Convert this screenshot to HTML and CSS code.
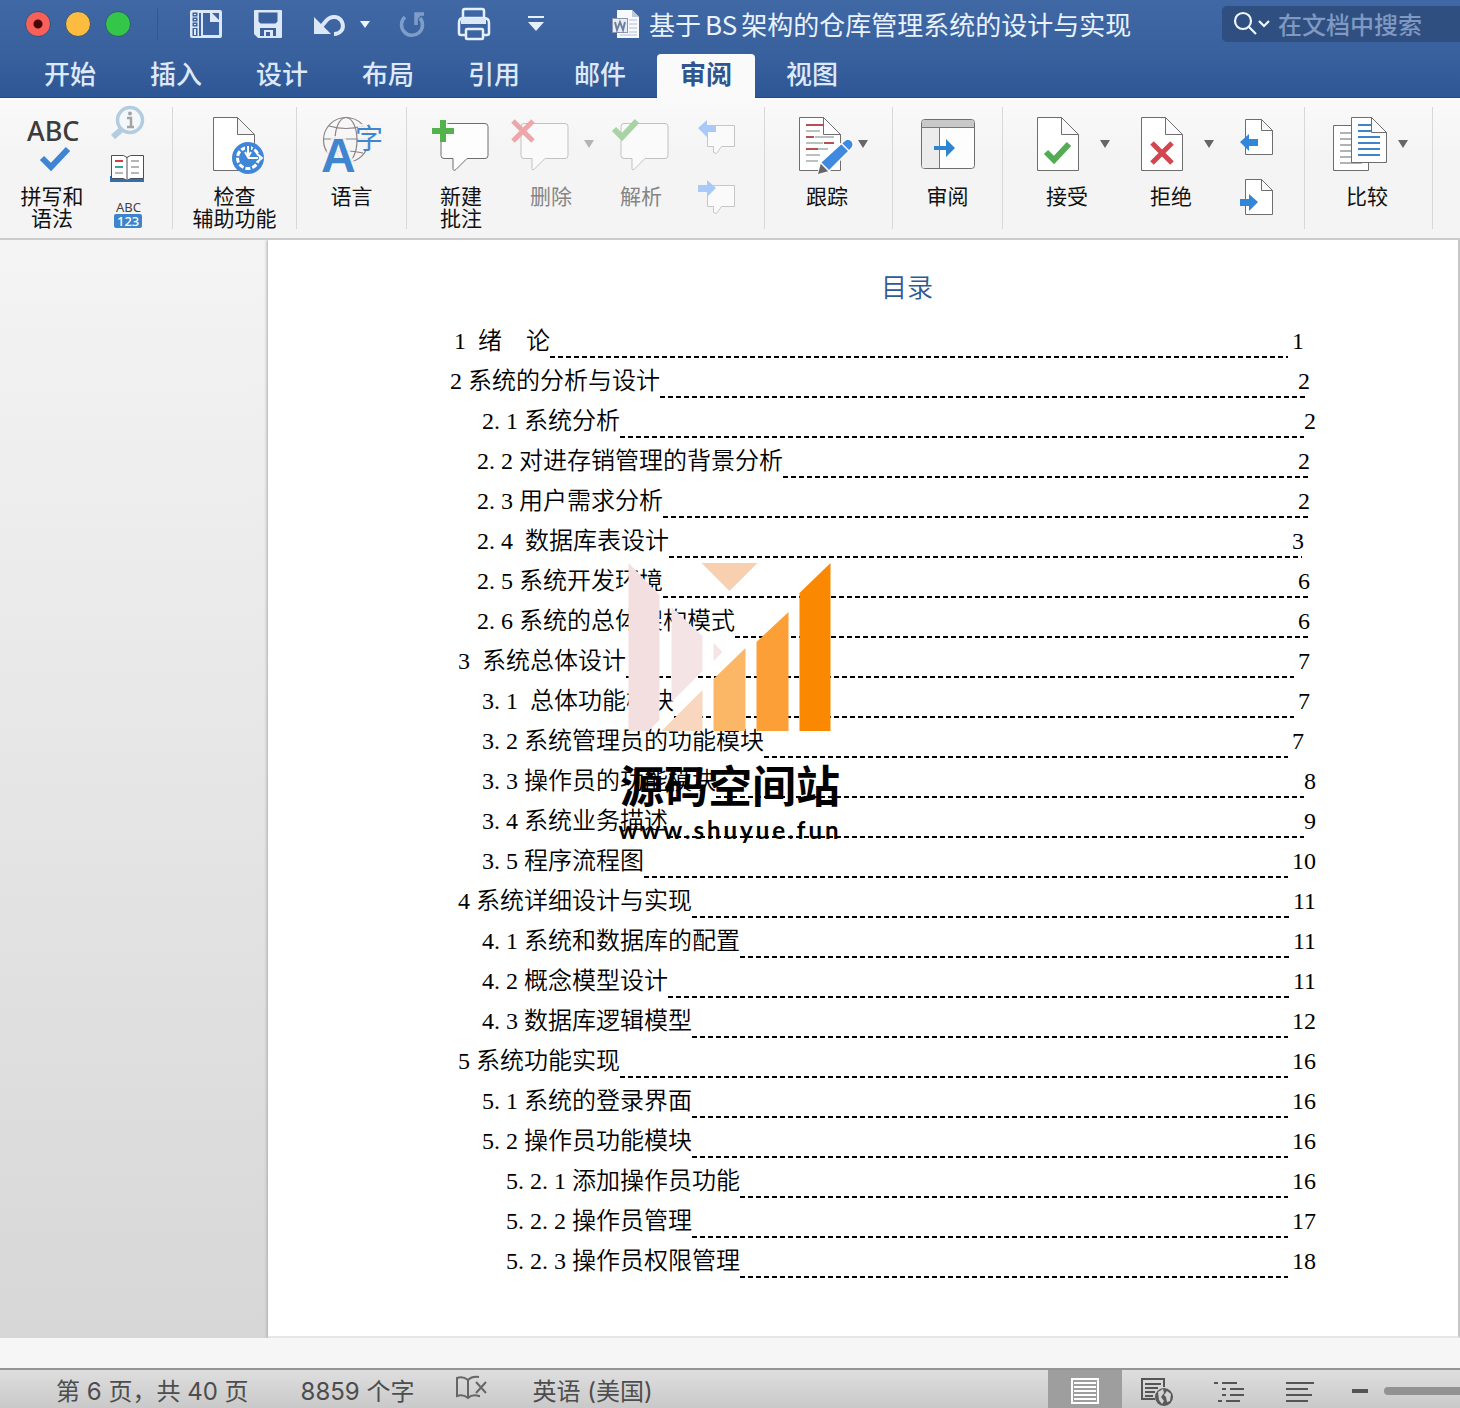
FILE: index.html
```html
<!DOCTYPE html>
<html lang="zh-CN">
<head>
<meta charset="utf-8">
<title>基于BS架构的仓库管理系统的设计与实现</title>
<link rel="stylesheet" href="styles.css">
</head>
<body>
<div class="window">
  <header class="chrome">
    <div class="titlebar">
      <div class="lights">
        <button class="light red" aria-label="关闭"></button>
        <button class="light yellow" aria-label="最小化"></button>
        <button class="light green" aria-label="缩放"></button>
      </div>
      <div class="quick">
        <button class="q" aria-label="边栏"><svg width="62" height="48" viewBox="175 0 62 48"><rect x="190" y="10" width="32" height="28" rx="2" fill="#dce7f7"/><path d="M192.500 12.500h5v4h-5zM192.500 17.500h5v4h-5zM192.500 22.500h5v4h-5zM199 13h2v23h-2zM192.500 28h5v8h-5zM203 13h7v9h9v13h-16z" fill="#3d64a0"/><path d="M212 13h7v7z" fill="#3d64a0"/><path d="M194 14h2v1h-2zM194 19h2v1h-2zM194 24h2v1h-2zM194 29h2v6h-2z" fill="#dce7f7"/></svg></button>
        <button class="q" aria-label="保存"><svg width="62" height="48" viewBox="237 0 62 48"><path d="M255 10h26q1 0 1 1v26q0 1-1 1h-23l-4-4v-23q0-1 1-1z" fill="#dce7f7"/><path d="M258.500 12.500h19v9l-2 2h-15l-2-2zM260 28h16v8h-3v-6h-9v6h-4zM266 32h4v4h-4z" fill="#3a619d"/></svg></button>
        <button class="q wide" aria-label="撤销"><svg width="82" height="48" viewBox="299 0 82 48"><path d="M321 27l5-6c5-6 13-5 16 1 3 7-2 12-8 12" fill="none" stroke="#dce7f7" stroke-width="4"/><path d="M314 17v17h17z" fill="#dce7f7"/><path d="M360 21h10l-5 7z" fill="#eef4fc"/></svg></button>
        <button class="q" aria-label="重做"><svg width="62" height="48" viewBox="381 0 62 48"><path d="M405 17a10.500 10.500 0 1 0 15 1M424 14h-8v11" fill="none" stroke="#7f9dc9" stroke-width="3.500"/><path d="M416 13h7l-7 8z" fill="#7f9dc9"/></svg></button>
        <button class="q" aria-label="打印"><svg width="62" height="48" viewBox="443 0 62 48"><g fill="none" stroke="#e6f0fc" stroke-width="2.500"><path d="M463 18v-7q0-2 2-2h17q2 0 2 2v7"/><path d="M465 35h-4q-2 0-2-2v-10q0-5 4-5h21q5 0 5 5v10q0 2-2 2h-3"/><rect x="466" y="29" width="17" height="10" rx="1"/></g><path d="M461 18h25v6h-25z" fill="#dce7f7"/></svg></button>
        <button class="q" aria-label="自定义工具栏"><svg width="62" height="48" viewBox="505 0 62 48"><path d="M528 16h16v2h-16zM528 22h16l-8 9z" fill="#e6f0fc"/></svg></button>
      </div>
      <h1 class="doc-title"><svg width="30" height="30" viewBox="611 9 30 30" aria-hidden="true"><path d="M617 10h15l7 7v21h-22z" fill="#f7f9fc"/><path d="M632 10l7 7h-7z" fill="#bfc8d6"/><path d="M629 20h8M629 24h8M629 28h8M629 32h8M620 35h17" stroke="#b6c0d0"/><rect x="612.500" y="18.500" width="15" height="14" fill="#e8edf5" stroke="#8a97ad"/><path d="M615 22l2 8 3-8 3 8 2-8" fill="none" stroke="#6d7f9f" stroke-width="2"/></svg><span>基于<span class="latin">BS</span>架构的仓库管理系统的设计与实现</span></h1>
      <label class="search"><svg width="36" height="26" viewBox="1233 11 36 26" aria-hidden="true"><g fill="none" stroke="#f1f6fd" stroke-width="2.200"><circle cx="1243" cy="21" r="8"/><path d="M1249 27l7 7M1259 21l5 5 5-5"/></g></svg><input type="text" placeholder="在文档中搜索" aria-label="在文档中搜索"></label>
    </div>
    <nav class="tabs">
      <button>开始</button><button>插入</button><button>设计</button><button>布局</button><button>引用</button><button>邮件</button><button class="active">审阅</button><button>视图</button>
    </nav>
  </header>

  <div class="ribbon">
    <div class="group g-proof">
      <button class="tool w104"><svg width="104" height="77" viewBox="0 107 104 77"><text x="27" y="141" class="abc">ABC</text><path d="M42 158l9 9 17-18" fill="none" stroke="#3f86d2" stroke-width="6"/></svg><span>拼写和<br>语法</span></button>
      <div class="stack">
        <button aria-label="智能查找"><svg width="48" height="41" viewBox="104 107 48 41"><path d="M113 137l9-8" stroke="#b4cce0" stroke-width="6"/><circle cx="130" cy="120" r="12.500" fill="#f4f8fb" stroke="#b4cce0" stroke-width="3.500"/><path d="M127 118h4v8m-4 1h7" fill="none" stroke="#a3a3a3" stroke-width="2.500"/><circle cx="130" cy="113.500" r="2" fill="#a3a3a3"/></svg></button>
        <button aria-label="同义词库"><svg width="48" height="41" viewBox="104 148 48 41"><path d="M110 176h34v6h-34z" fill="#2f6fb3"/><path d="M111.500 155.500h12l3.500 2 3.500-2h13v23h-13l-3.500 2-3.500-2h-12z" fill="#fff" stroke="#4a5058"/><path d="M127 157v23" stroke="#4a5058"/><path d="M115 161h8" stroke="#d23c45" stroke-width="2"/><path d="M115 167h8" stroke="#38a39b" stroke-width="2"/><path d="M115 173h8M131 161h8M131 167h8M131 173h8" stroke="#b5b5b5" stroke-width="2"/></svg></button>
        <button aria-label="字数统计"><svg width="48" height="41" viewBox="104 189 48 41"><text x="116" y="212" class="abc-sm">ABC</text><rect x="114" y="214" width="28" height="14" rx="2" fill="#3d84cb"/><text x="117" y="226" class="num-sm">123</text></svg></button>
      </div>
    </div>
    <div class="group g-124">
      <button class="tool fill"><svg width="124" height="77" viewBox="173 107 124 77"><path d="M213.500 117.500h24l17 17v36h-41z" fill="#fff" stroke="#6e6e6e"/><path d="M237.500 117.500v17h17z" fill="#f5f5f5" stroke="#6e6e6e"/><circle cx="248" cy="158" r="16" fill="#3f86d6"/><circle cx="248" cy="158" r="10.500" fill="none" stroke="#fff" stroke-width="3" stroke-dasharray="5 2"/><path d="M248 145v13h11" fill="none" stroke="#3f86d6" stroke-width="6"/><path d="M248 146v10M248 158h10M245 152l3 5 3-5M257 154l5 4-5 4" fill="none" stroke="#fff" stroke-width="2"/></svg><span>检查<br>辅助功能</span></button>
    </div>
    <div class="group g-110">
      <button class="tool fill"><svg width="110" height="77" viewBox="297 107 110 77"><g fill="none" stroke="#8c8484" stroke-width="1.200"><circle cx="346" cy="140" r="22.500"/><ellipse cx="346" cy="140" rx="11" ry="22.500"/><path d="M324 139h44M329 126q17 5 34 0M329 153q17-4 34 0"/></g><path d="M358 124h26v27h-26z" fill="#f6f5f6" opacity=".85"/><path d="M319 174l13-38h13l13 38z" fill="#f6f5f6" opacity=".85"/><text x="321" y="172" class="big-a">A</text><text x="355" y="149" class="zi">字</text></svg><span>语言</span></button>
    </div>
    <div class="group g-comments">
      <button class="tool w80"><svg width="80" height="77" viewBox="421 107 80 77"><path d="M446 123.500h39q3 0 3 3v29q0 3-3 3h-18l-11 11q-3 2-3-1v-10h-9q-3 0-3-3v-20z" fill="#fdfdfd" stroke="#6e6e6e"/><path d="M432 131h22M443 120v22" stroke="#f5f5f5" stroke-width="9"/><path d="M432 131h22M443 120v22" stroke="#54b24d" stroke-width="6"/></svg><span>新建<br>批注</span></button>
      <button class="tool w100" disabled><svg width="100" height="77" viewBox="501 107 100 77"><path d="M524 123.500h41q3 0 3 3v29q0 3-3 3h-20l-11 11q-2 1-2-1v-10h-8q-3 0-3-3v-29q0-3 3-3z" fill="#fafafa" stroke="#c2c2c2"/><path d="M513 121l20 20M533 121l-20 20" stroke="#eda6aa" stroke-width="5"/><path d="M584 140h10l-5 8z" fill="#b4b4b4"/></svg><span>删除</span></button>
      <button class="tool w80" disabled><svg width="80" height="77" viewBox="601 107 80 77"><path d="M624 123.500h41q3 0 3 3v29q0 3-3 3h-20l-11 11q-2 1-2-1v-10h-8q-3 0-3-3v-29q0-3 3-3z" fill="#fafafa" stroke="#c2c2c2"/><path d="M614 129l8 8 15-16" fill="none" stroke="#a8d3a5" stroke-width="6"/></svg><span>解析</span></button>
      <div class="stack">
        <button aria-label="上一条批注" disabled><svg width="72" height="61" viewBox="681 107 72 61"><path d="M709.500 125.500h25v21h-13l-5 7-3-1v-6h-6v-20z" fill="#fafafa" stroke="#c6c6c6"/><path d="M698 128l9-8v5h9v7h-9v5z" fill="#a9c9f8"/></svg></button>
        <button aria-label="下一条批注" disabled><svg width="72" height="61" viewBox="681 168 72 61"><path d="M709.500 185.500h25v21h-13l-5 7-3-1v-6h-6v-20z" fill="#fafafa" stroke="#c6c6c6"/><path d="M716 188l-9-8v5h-9v7h9v5z" fill="#a9c9f8"/></svg></button>
      </div>
    </div>
    <div class="group g-128">
      <button class="tool w124"><svg width="124" height="77" viewBox="765 107 124 77"><path d="M799.500 117.500h24l17 17v36h-41z" fill="#fff" stroke="#6e6e6e"/><path d="M806 125h18M806 137h8M824 143h10M806 149h12" stroke="#b55055" stroke-width="1.800"/><path d="M806 131h14M815 137h19M806 143h17M818 149h10M806 155h14M806 161h12" stroke="#b9c2bd" stroke-width="1.800"/><path d="M823.500 117.500v17h17z" fill="#fff" stroke="#6e6e6e"/><path d="M818 174l3-12 23-21q4-4 8 0 3 4-1 8l-22 22z" fill="#3f8ae0" stroke="#fff" stroke-width="1.500"/><path d="M818 174l3-11 8 8z" fill="#666"/><path d="M841 143l8 8M820 162l10 10" stroke="#fff" stroke-width="1.500"/><path d="M858 140h10l-5 8z" fill="#666"/></svg><span>跟踪</span></button>
    </div>
    <div class="group g-110">
      <button class="tool fill"><svg width="110" height="77" viewBox="893 107 110 77"><rect x="921.500" y="119.500" width="53" height="49" rx="3" fill="#fdfdfd" stroke="#6e6e6e"/><path d="M922 128h17.500v40H924q-2 0-2-2z" fill="#ececec"/><path d="M922 127.500v-5q0-2.500 2.500-2.500h47q2.500 0 2.500 2.500v5z" fill="#c8c8c8"/><path d="M922 127.500h52M939.500 128v40" stroke="#777"/><path d="M934 146h12v-7l9 9-9 9v-7h-12z" fill="#2f84d0"/></svg><span>审阅</span></button>
    </div>
    <div class="group g-changes">
      <button class="tool w96"><svg width="96" height="77" viewBox="1019 107 96 77"><path d="M1037.500 117.500h24l17 17v36h-41z" fill="#fff" stroke="#6e6e6e"/><path d="M1061.500 117.500v17h17z" fill="#fafafa" stroke="#6e6e6e"/><path d="M1046 152l8 8 15-16" fill="none" stroke="#55ab53" stroke-width="6"/><path d="M1100 140h10l-5 8z" fill="#666"/></svg><span>接受</span></button>
      <button class="tool w96 gap8"><svg width="96" height="77" viewBox="1123 107 96 77"><path d="M1141.500 117.500h24l17 17v36h-41z" fill="#fff" stroke="#6e6e6e"/><path d="M1165.500 117.500v17h17z" fill="#fafafa" stroke="#6e6e6e"/><path d="M1152 143l20 20M1172 143l-20 20" stroke="#d2474f" stroke-width="5"/><path d="M1204 140h10l-5 8z" fill="#666"/></svg><span>拒绝</span></button>
      <div class="stack">
        <button aria-label="上一处修订"><svg width="72" height="61" viewBox="1219 107 72 61"><path d="M1245.500 119.500h16l11 11v24h-27z" fill="#fff" stroke="#6e6e6e"/><path d="M1261.500 119.500v11h11z" fill="#fafafa" stroke="#6e6e6e"/><path d="M1240 142l9-8v5h9v7h-9v5z" fill="#3286d8"/></svg></button>
        <button aria-label="下一处修订"><svg width="72" height="61" viewBox="1219 168 72 61"><path d="M1245.500 179.500h16l11 11v24h-27z" fill="#fff" stroke="#6e6e6e"/><path d="M1261.500 179.500v11h11z" fill="#fafafa" stroke="#6e6e6e"/><path d="M1258 202l-9-8v5h-9v7h9v5z" fill="#3286d8"/></svg></button>
      </div>
    </div>
    <div class="group g-128">
      <button class="tool w124"><svg width="124" height="77" viewBox="1305 107 124 77"><path d="M1333.500 125.500h35v45h-35z" fill="#fff" stroke="#6e6e6e"/><path d="M1340 133h14M1340 139h14M1340 145h14M1340 151h14M1340 157h14M1340 163h22" stroke="#999" stroke-width="1.500"/><path d="M1351.500 117.500h20l15 15v30h-35z" fill="#fff" stroke="#6e6e6e"/><path d="M1358 125h14M1358 131h14M1358 137h22M1358 143h22M1358 149h22M1358 155h22" stroke="#3f86c8" stroke-width="2"/><path d="M1371.500 117.500v15h15z" fill="#fff" stroke="#6e6e6e"/><path d="M1398 140h10l-5 8z" fill="#666"/></svg><span>比较</span></button>
    </div>
  </div>

  <main class="canvas">
    <article class="page">
      <h2>目录</h2>
      <ol class="toc">
        <li class="in4 r12"><span>1&nbsp; 绪　论</span><i></i><b>1</b></li>
        <li class="in0 r6 under"><span>2 系统的分析与设计</span><i></i><b>2</b></li>
        <li class="in32 r0 flush"><span>2<em>.</em>1 系统分析</span><i></i><b>2</b></li>
        <li class="in27 r6 under"><span>2<em>.</em>2 对进存销管理的背景分析</span><i></i><b>2</b></li>
        <li class="in27 r6 under"><span>2<em>.</em>3 用户需求分析</span><i></i><b>2</b></li>
        <li class="in27 r12 under"><span>2<em>.</em>4&nbsp; 数据库表设计</span><i></i><b>3</b></li>
        <li class="in27 r6 under"><span>2<em>.</em>5 系统开发环境</span><i></i><b>6</b></li>
        <li class="in27 r6 under"><span>2<em>.</em>6 系统的总体架构模式</span><i></i><b>6</b></li>
        <li class="in8 r6"><span>3&nbsp; 系统总体设计</span><i></i><b>7</b></li>
        <li class="in32 r6"><span>3<em>.</em>1&nbsp; 总体功能模块</span><i></i><b>7</b></li>
        <li class="in32 r12"><span>3<em>.</em>2 系统管理员的功能模块</span><i></i><b>7</b></li>
        <li class="in32 r0 flush"><span>3<em>.</em>3 操作员的功能模块</span><i></i><b>8</b></li>
        <li class="in32 r0 flush"><span>3<em>.</em>4 系统业务描述</span><i></i><b>9</b></li>
        <li class="in32 r0"><span>3<em>.</em>5 程序流程图</span><i></i><b>10</b></li>
        <li class="in8 r0"><span>4 系统详细设计与实现</span><i></i><b>11</b></li>
        <li class="in32 r0"><span>4<em>.</em>1 系统和数据库的配置</span><i></i><b>11</b></li>
        <li class="in32 r0"><span>4<em>.</em>2 概念模型设计</span><i></i><b>11</b></li>
        <li class="in32 r0"><span>4<em>.</em>3 数据库逻辑模型</span><i></i><b>12</b></li>
        <li class="in8 r0"><span>5 系统功能实现</span><i></i><b>16</b></li>
        <li class="in32 r0"><span>5<em>.</em>1 系统的登录界面</span><i></i><b>16</b></li>
        <li class="in32 r0"><span>5<em>.</em>2 操作员功能模块</span><i></i><b>16</b></li>
        <li class="in56 r0"><span>5<em>.</em>2<em>.</em>1 添加操作员功能</span><i></i><b>16</b></li>
        <li class="in56 r0"><span>5<em>.</em>2<em>.</em>2 操作员管理</span><i></i><b>17</b></li>
        <li class="in56 r0"><span>5<em>.</em>2<em>.</em>3 操作员权限管理</span><i></i><b>18</b></li>
      </ol>
    </article>
    <div class="watermark">
      <svg width="204" height="170" viewBox="628 562 204 170" aria-hidden="true"><path fill="#f3dfe0" d="M629 563l31 32v125l-11 11h-20z"/><path fill="#f4e4e5" d="M672 607l31 29v35l-31 31zM714 643l9 9-9 9z"/><path fill="#f8d0b0" d="M702 563h56l-28 28z"/><path fill="#f9d7bf" d="M703 690v41h-41z"/><path fill="#fcb766" d="M714 679l32-31v83h-32z"/><path fill="#fc9f36" d="M757 642l32-30v119h-32z"/><path fill="#fa8801" d="M800 593l31-30v168h-31z"/></svg>
      <strong>源码空间站</strong>
      <span>www.shuyue.fun</span>
    </div>
  </main>

  <footer class="status">
    <span class="pages">第 6 页，共 40 页</span>
    <span class="words">8859 个字</span>
    <button class="proof" aria-label="校对"><svg width="34" height="30" viewBox="455 1376 34 30"><g fill="none" stroke="#666" stroke-width="2"><path d="M468 1382q-5-4-11-2v18q6-2 11 2 4-4 11-2v-1M468 1382v18M468 1382q4-4 11-3"/><path d="M476 1384l10 11M486 1384l-10 11"/></g></svg></button>
    <span class="lang">英语 (美国)</span>
    <div class="views">
      <button class="on" aria-label="打印布局"><svg width="74" height="38" viewBox="1048 1370 74 38"><rect x="1072" y="1379" width="26" height="24" fill="none" stroke="#fff" stroke-width="2"/><path d="M1074 1383h22M1074 1387h22M1074 1391h22M1074 1395h22M1074 1399h22" stroke="#fff" stroke-width="2"/></svg></button>
      <button aria-label="Web 版式"><svg width="72" height="38" viewBox="1122 1370 72 38"><path d="M1155 1399h-13v-20h22v8" fill="none" stroke="#555" stroke-width="2"/><path d="M1145 1384h16M1145 1388h13M1145 1392h10M1145 1396h8" stroke="#555" stroke-width="2"/><circle cx="1164" cy="1397" r="9" fill="#5a5a5a"/><path d="M1158 1392l5-3 1 4-3 4 3 4-2 3-3-4zM1167 1391l4 3-1 7-3 1-1-5-2-2z" fill="#d2d2d2"/></svg></button>
      <button aria-label="大纲"><svg width="72" height="38" viewBox="1194 1370 72 38"><path d="M1214 1383h4M1222 1383h15M1222 1389h4M1230 1389h14M1222 1395h4M1230 1395h14M1218 1401h4M1226 1401h14" stroke="#555" stroke-width="2"/></svg></button>
      <button aria-label="草稿"><svg width="72" height="38" viewBox="1266 1370 72 38"><path d="M1286 1383h28M1286 1389h22M1286 1395h26M1286 1401h22" stroke="#555" stroke-width="2"/></svg></button>
      <button class="minus" aria-label="缩小"><svg width="42" height="38" viewBox="1338 1370 42 38"><path d="M1352 1391h16" stroke="#555" stroke-width="4"/></svg></button>
      <div class="track"></div>
    </div>
  </footer>
</div>
</body>
</html>
```
FILE: styles.css
```css
* { box-sizing: border-box; }
body { margin: 0; font-family: "Noto Sans CJK SC", sans-serif; color: #111; background: #f5f5f5; }
button { margin: 0; padding: 0; border: 0; background: none; font: inherit; color: inherit; }
svg { display: block; overflow: visible; flex: none; }
.window { min-height: 100vh; display: flex; flex-direction: column; overflow: hidden; }

.chrome { background: linear-gradient(#3f68a4, #38609d 60%, #2d5694); border-bottom: 1px solid #2a4a7c; }
.titlebar { display: flex; height: 48px; }
.lights { display: flex; gap: 14px; align-items: center; padding-left: 25px; width: 158px; background: linear-gradient(#35578c, #35578c) right 8px / 1px 32px no-repeat; }
.light { width: 26px; height: 26px; border-radius: 50%; border: 1px solid #36547f; }
.red { background: radial-gradient(circle, #4a0606 0 4px, #f9605a 5px); }
.yellow { background: #fcbc40; }
.green { background: #34c648; }
.quick { display: flex; margin-left: 17px; }
.doc-title { flex: 1; display: flex; align-items: center; gap: 8px; margin: 0; padding-left: 44px; font-size: 26px; font-weight: 400; line-height: 48px; color: #eaf2fd; white-space: nowrap; }
.latin { padding: 0 4px; }
.search { display: flex; align-items: center; width: 238px; height: 36px; margin-top: 6px; padding-left: 11px; gap: 9px; background: #2f4f80; border-radius: 5px 0 0 5px; }
.search input { flex: 1; min-width: 0; padding: 0; border: 0; outline: 0; background: none; font: 500 24px/36px "Noto Sans CJK SC", sans-serif; color: #fff; }
.search input::placeholder { color: #7f99c2; opacity: 1; }

.tabs { display: flex; gap: 8px; padding: 6px 0 0 21px; }
.tabs button { width: 98px; height: 43px; padding-bottom: 5px; font-size: 26px; font-weight: 500; line-height: 38px; color: #dde9fa; }
.tabs .active { height: 44px; margin-bottom: -1px; padding-bottom: 6px; background: #fafafa; color: #2f568f; font-weight: 700; border-radius: 4px 4px 0 0; }

.ribbon { display: flex; height: 142px; padding: 9px 0; background: linear-gradient(#fafafa, #f4f4f4 40%); border-bottom: 2px solid #cbcbcb; }
.group { display: flex; border-right: 1px solid #d8d8d8; }
.g-proof { width: 173px; }
.g-124 { width: 124px; }
.g-110 { width: 110px; }
.g-128 { width: 128px; }
.g-comments { width: 358px; padding-left: 14px; }
.g-changes { width: 302px; padding-left: 16px; }
.stack { display: flex; flex-direction: column; }
.tool { display: flex; flex-direction: column; align-items: center; font-size: 21px; line-height: 22px; white-space: nowrap; }
.tool:disabled { color: #858585; }
.w80 { width: 80px; }
.w96 { width: 96px; }
.w100 { width: 100px; }
.w104 { width: 104px; }
.w124 { width: 124px; }
.fill { width: 100%; }
.gap8 { margin-left: 8px; }
.abc { font: 500 27px "Noto Sans", sans-serif; fill: #3c3c3c; }
.abc-sm { font: 13px "Noto Sans", sans-serif; fill: #444; }
.num-sm { font: 500 13px "Noto Sans", sans-serif; fill: #fff; }
.big-a { font: bold 48px "Liberation Sans", sans-serif; fill: #3f86cf; }
.zi { font: 28px "Noto Sans CJK SC", sans-serif; fill: #3f86cf; }

.canvas { position: relative; flex: 1; display: flex; padding: 0 0 30px 268px; background: linear-gradient(#f6f6f6, #f6f6f6) bottom / 100% 30px no-repeat, linear-gradient(#f4f4f4, #d6d6d6); }
.page { flex: 1; padding: 26px 142px 55px 182px; background: #fff; border-right: 2px solid #c6c6c6; border-bottom: 2px solid #e6e6e6; box-shadow: -1px 0 3px #aaa; clip-path: inset(0 0 0 -6px); }
.page h2 { margin: 0 0 15px; padding-left: 48px; font-size: 26px; line-height: 40px; font-weight: 350; text-align: center; color: #2f5a94; }
.toc { margin: 0; padding: 0; list-style: none; font-family: "Liberation Serif", "Noto Sans CJK SC", serif; font-weight: 350; font-size: 24px; line-height: 40px; color: #000; }
.toc li { display: flex; height: 40px; white-space: nowrap; }
.toc em { font-style: normal; padding-right: 6px; }
.toc i { flex: 1; height: 2px; margin-top: 35px; background: repeating-linear-gradient(90deg, #000 0 5px, transparent 5px 8px); }
.toc b { margin-left: 4px; font-weight: 350; }
.toc .flush b { margin-left: 0; }
.toc .under b { margin-left: -10px; }
.in4 { padding-left: 4px; }
.in8 { padding-left: 8px; }
.in27 { padding-left: 27px; }
.in32 { padding-left: 32px; }
.in56 { padding-left: 56px; }
.r6 { padding-right: 6px; }
.r12 { padding-right: 12px; }

.watermark { position: absolute; top: 322px; left: 50%; transform: translateX(-50%); display: flex; flex-direction: column; align-items: center; color: #000; }
.watermark strong { margin-top: 22px; font-size: 44px; font-weight: 700; line-height: 60px; }
.watermark span { font: bold 24px/32px Lato, sans-serif; letter-spacing: 3px; }

.status { display: flex; align-items: center; height: 40px; padding-left: 56px; border-top: 2px solid #939695; background: linear-gradient(#dedede, #c9c9c9); font-family: Inter, "Noto Sans CJK SC", sans-serif; font-size: 24px; line-height: 32px; color: #4d4d4d; white-space: nowrap; overflow: hidden; }
.pages, .words, .lang { padding-top: 6px; }
.words { margin-left: 52px; }
.proof { margin-left: 41px; }
.lang { margin-left: 43px; }
.views { display: flex; align-items: center; margin-left: auto; }
.views .on { background: #9e9e9e; }
.track { width: 76px; height: 8px; margin: 4px 0 0 4px; border-radius: 4px 0 0 4px; background: #929292; }
```
